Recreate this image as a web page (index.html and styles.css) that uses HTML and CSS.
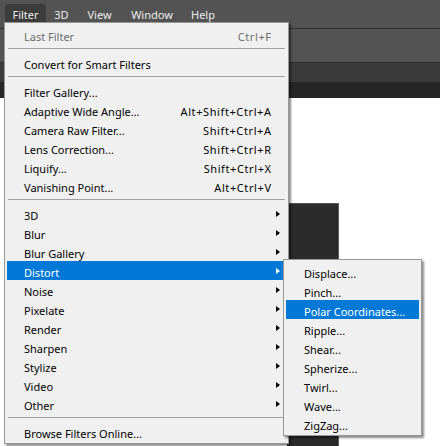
FILE: index.html
```html
<!DOCTYPE html>
<html>
<head>
<meta charset="utf-8">
<link rel="stylesheet" href="styles.css">
</head>
<body>
<div class="app">
  <div class="menubar">
    <div class="mb-item active w-filter">Filter</div>
    <div class="mb-item w-3d">3D</div>
    <div class="mb-item w-view">View</div>
    <div class="mb-item w-window">Window</div>
    <div class="mb-item w-help">Help</div>
  </div>
  <div class="optionsbar"></div>
  <div class="tabbar"></div>
  <div class="tabshadow"></div>
  <div class="workspace">
    <div class="docwin"></div>
  </div>

  <div class="menu main">
    <div class="row disabled"><span class="label">Last Filter</span><span class="sc">Ctrl+F</span><span class="ar"></span></div>
    <div class="sep"></div>
    <div class="row"><span class="label">Convert for Smart Filters</span><span class="sc"></span><span class="ar"></span></div>
    <div class="sep"></div>
    <div class="row"><span class="label">Filter Gallery...</span><span class="sc"></span><span class="ar"></span></div>
    <div class="row"><span class="label">Adaptive Wide Angle...</span><span class="sc">Alt+Shift+Ctrl+A</span><span class="ar"></span></div>
    <div class="row"><span class="label">Camera Raw Filter...</span><span class="sc">Shift+Ctrl+A</span><span class="ar"></span></div>
    <div class="row"><span class="label">Lens Correction...</span><span class="sc">Shift+Ctrl+R</span><span class="ar"></span></div>
    <div class="row"><span class="label">Liquify...</span><span class="sc">Shift+Ctrl+X</span><span class="ar"></span></div>
    <div class="row"><span class="label">Vanishing Point...</span><span class="sc">Alt+Ctrl+V</span><span class="ar"></span></div>
    <div class="sep"></div>
    <div class="row"><span class="label">3D</span><span class="sc"></span><span class="ar"><i class="tri"></i></span></div>
    <div class="row"><span class="label">Blur</span><span class="sc"></span><span class="ar"><i class="tri"></i></span></div>
    <div class="row"><span class="label">Blur Gallery</span><span class="sc"></span><span class="ar"><i class="tri"></i></span></div>
    <div class="row hl"><span class="label">Distort</span><span class="sc"></span><span class="ar"><i class="tri"></i></span></div>
    <div class="row"><span class="label">Noise</span><span class="sc"></span><span class="ar"><i class="tri"></i></span></div>
    <div class="row"><span class="label">Pixelate</span><span class="sc"></span><span class="ar"><i class="tri"></i></span></div>
    <div class="row"><span class="label">Render</span><span class="sc"></span><span class="ar"><i class="tri"></i></span></div>
    <div class="row"><span class="label">Sharpen</span><span class="sc"></span><span class="ar"><i class="tri"></i></span></div>
    <div class="row"><span class="label">Stylize</span><span class="sc"></span><span class="ar"><i class="tri"></i></span></div>
    <div class="row"><span class="label">Video</span><span class="sc"></span><span class="ar"><i class="tri"></i></span></div>
    <div class="row"><span class="label">Other</span><span class="sc"></span><span class="ar"><i class="tri"></i></span></div>
    <div class="sep"></div>
    <div class="row"><span class="label">Browse Filters Online...</span><span class="sc"></span><span class="ar"></span></div>
  </div>

  <div class="menu sub">
    <div class="row"><span class="label">Displace...</span></div>
    <div class="row"><span class="label">Pinch...</span></div>
    <div class="row hl"><span class="label">Polar Coordinates...</span></div>
    <div class="row"><span class="label">Ripple...</span></div>
    <div class="row"><span class="label">Shear...</span></div>
    <div class="row"><span class="label">Spherize...</span></div>
    <div class="row"><span class="label">Twirl...</span></div>
    <div class="row"><span class="label">Wave...</span></div>
    <div class="row"><span class="label">ZigZag...</span></div>
  </div>
</div>
</body>
</html>
```

FILE: styles.css
```css
* { box-sizing: border-box; }
html, body { margin: 0; padding: 0; }
body {
  width: 440px;
  height: 446px;
  overflow: hidden;
  background: #ffffff;
  font-family: "Noto Sans", "Open Sans", sans-serif;
  font-size: 11px;
  -webkit-font-smoothing: none;
}
.app {
  position: relative;
  width: 440px;
  height: 446px;
  display: flex;
  flex-direction: column;
  overflow: hidden;
}
.menubar {
  height: 28px;
  background: #535353;
  display: flex;
  align-items: flex-end;
  padding-left: 5px;
  padding-bottom: 5px;
  flex: none;
}
.mb-item {
  height: 19px;
  line-height: 15px;
  padding-top: 3px;
  color: #ececec;
  text-align: center;
  border-radius: 3px 3px 0 0;
}
.mb-item.active { background: #3c3c3c; }
.w-filter { width: 41px; }
.w-3d { width: 31px; }
.w-view { width: 45px; }
.w-window { width: 60px; }
.w-help { width: 42px; }
.optionsbar {
  height: 35px;
  flex: none;
  background: #535353;
  border-top: 1px solid #2f2f2f;
  border-bottom: 1px solid #2f2f2f;
}
.tabbar {
  height: 19px;
  flex: none;
  background: #3a3a3a;
}
.tabshadow {
  height: 16px;
  flex: none;
  background: #262626;
}
.workspace {
  flex: 1;
  background: #ffffff;
  padding-top: 105px;
  padding-left: 287px;
}
.docwin {
  width: 52px;
  height: 300px;
  background: #2b2b2b;
  border-top: 1px solid #555555;
  border-right: 1px solid #5a5a5a;
}

.menu {
  position: absolute;
  background: #f0f0f0;
  border: 1px solid #979797;
  padding: 2px;
  color: #000000;
  box-shadow: 2px 2px 2px rgba(0,0,0,0.45);
}
.menu.main {
  left: 4px;
  top: 22px;
  width: 285px;
}
.menu.sub {
  left: 283px;
  top: 259px;
  width: 139px;
}
.row {
  height: 19px;
  line-height: 15px;
  padding-top: 4px;
  display: grid;
  grid-template-columns: 1fr auto 10px;
  column-gap: 5px;
  padding-left: 17px;
  white-space: nowrap;
}
.sub .row {
  display: block;
  padding-left: 18px;
}
.row.disabled { color: #6d6d6d; }
.row.hl { background: #0078d7; color: #ffffff; }
.sc {
  text-align: right;
  letter-spacing: 0.6px;
  margin-right: -0.6px;
}
.ar {
  display: flex;
  align-items: center;
  margin-top: -4px;
  height: 19px;
}
.tri {
  display: block;
  width: 0;
  height: 0;
  border-top: 3.5px solid transparent;
  border-bottom: 3.5px solid transparent;
  border-left: 4px solid #000000;
}
.row.hl .tri { border-left-color: #ffffff; }
.sep {
  height: 1px;
  margin: 4px 1px 4px 1px;
  background: #a0a0a0;
}
```
